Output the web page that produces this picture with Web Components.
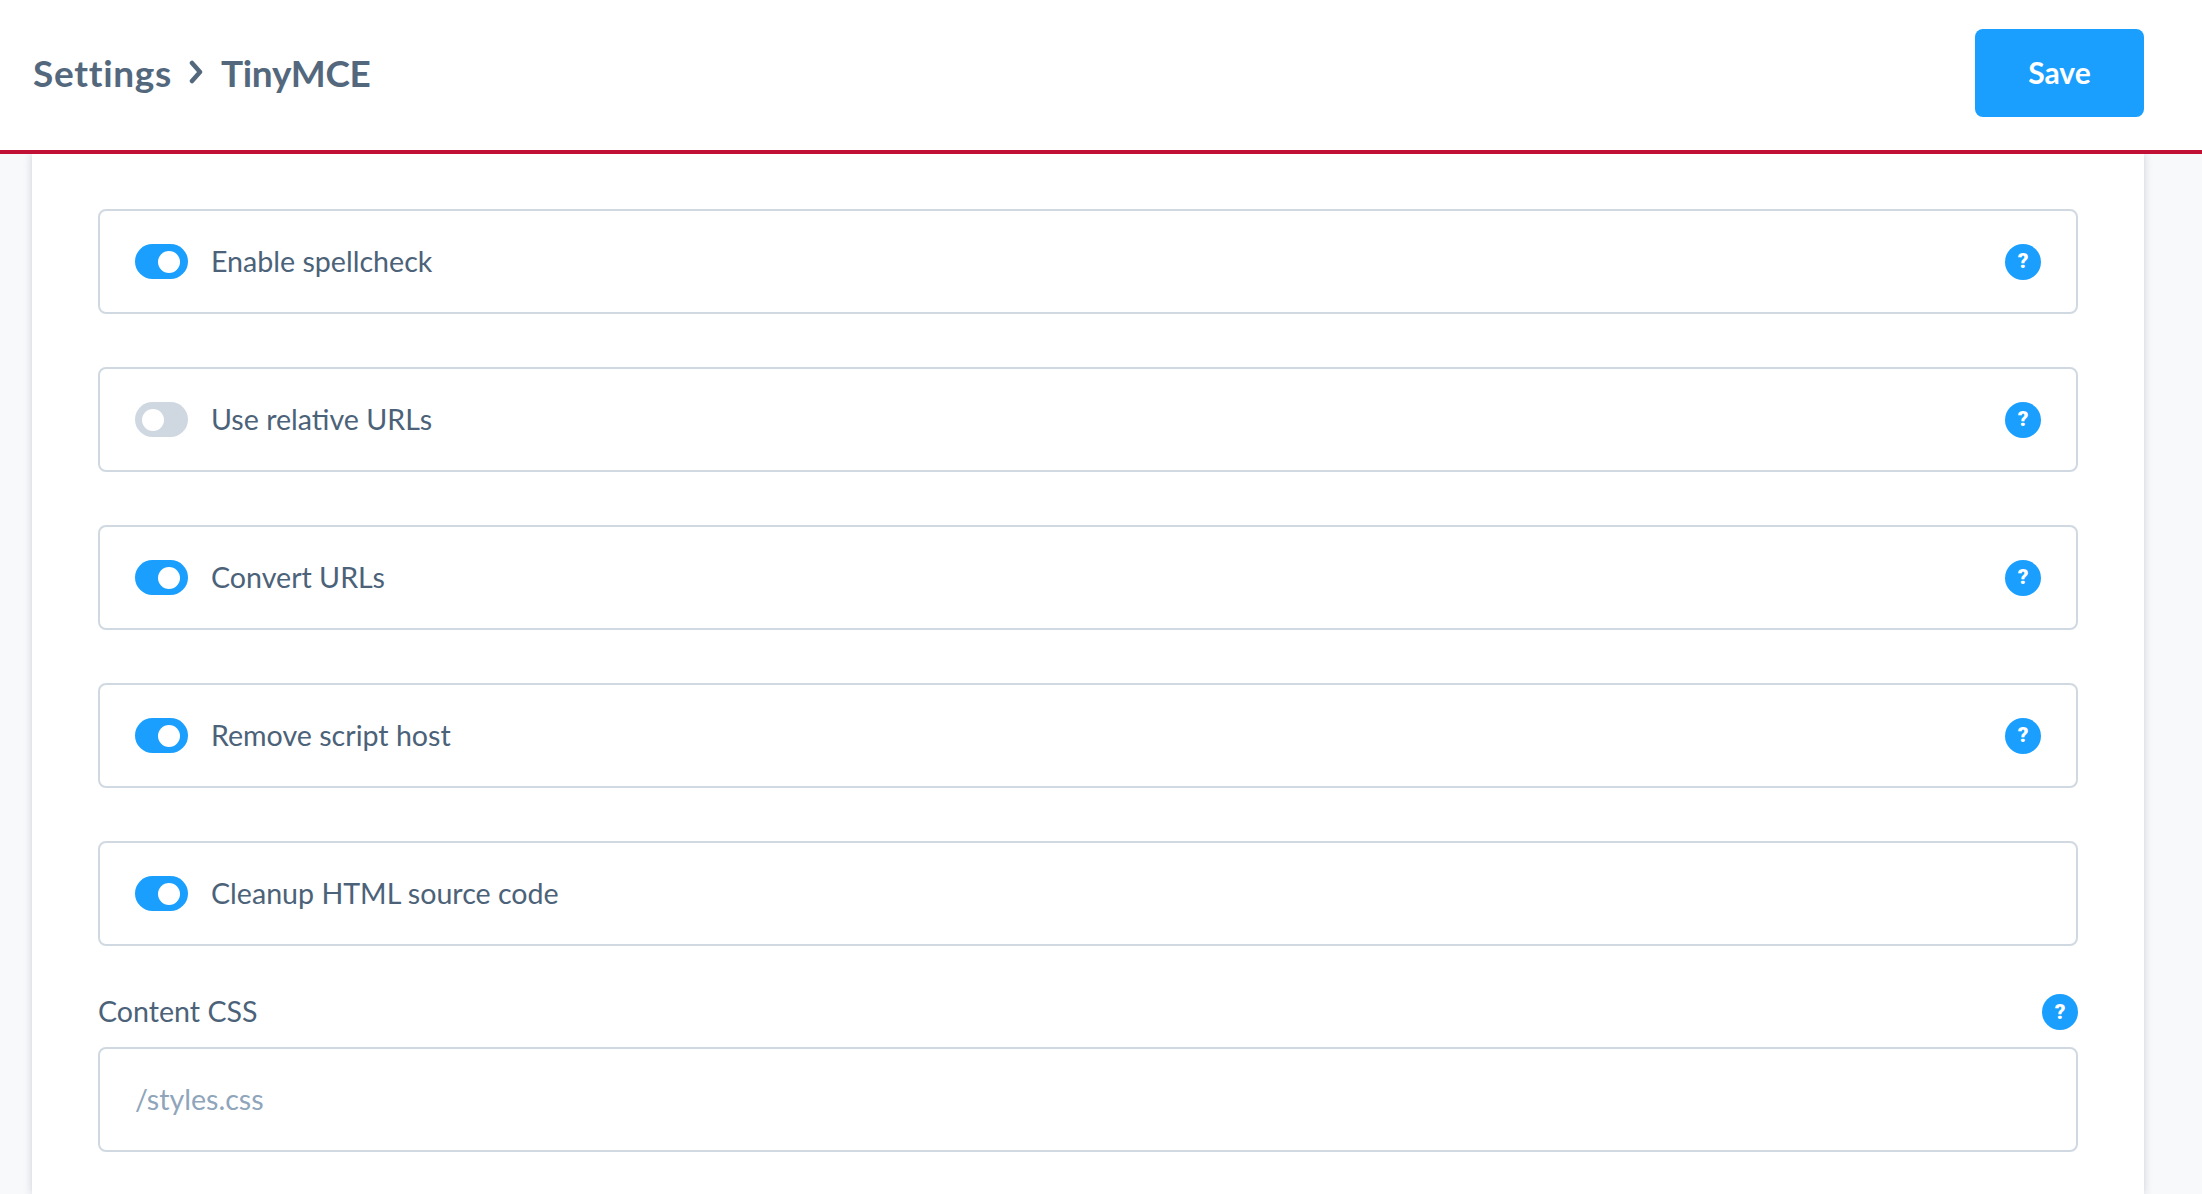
<!DOCTYPE html>
<html lang="en">
<head>
<meta charset="utf-8">
<title>Settings - TinyMCE</title>
<style>
  html, body { margin: 0; height: 100%; overflow: hidden; }
  body {
    background: #f8f9fb;
    color: #4b6279;
    font-family: "Lato", "Liberation Sans", sans-serif;
  }
</style>
</head>
<body>
<settings-page>
  <page-header slot="header" current="TinyMCE"></page-header>
  <toggle-row label="Enable spellcheck" checked help></toggle-row>
  <toggle-row label="Use relative URLs" help></toggle-row>
  <toggle-row label="Convert URLs" checked help></toggle-row>
  <toggle-row label="Remove script host" checked help></toggle-row>
  <toggle-row label="Cleanup HTML source code" checked></toggle-row>
  <text-field label="Content CSS" placeholder="/styles.css"></text-field>
</settings-page>

<script>
class SettingsPage extends HTMLElement {
  connectedCallback() {
    this.attachShadow({ mode: "open" });
    this.shadowRoot.innerHTML = `
      <style>
        :host { display: flex; flex-direction: column; height: 100vh; }
        .content {
          flex: 1;
          margin: 0 58px 0 32px;
          padding: 55px 66px 0;
          background: #fff;
          box-shadow: 0 0 8px rgba(40, 55, 75, 0.22);
          display: flex;
          flex-direction: column;
          gap: 53px;
        }
      </style>
      <slot name="header"></slot>
      <main class="content"><slot></slot></main>
    `;
  }
}

class PageHeader extends HTMLElement {
  connectedCallback() {
    this.attachShadow({ mode: "open" });
    this.shadowRoot.innerHTML = `
      <style>
        :host {
          display: flex;
          align-items: center;
          justify-content: space-between;
          box-sizing: border-box;
          height: 154px;
          padding: 0 58px 4px 33px;
          background: #fff;
          border-bottom: 4px solid #c01034;
          position: relative;
          z-index: 2;
        }
        .crumbs {
          display: flex;
          align-items: center;
          padding-bottom: 2px;
          font-size: 37px;
          font-weight: 700;
          color: #53687d;
        }
        .root { letter-spacing: 0.7px; }
        .current { letter-spacing: -0.3px; }
        svg { width: 18px; height: 24px; margin: 0 16px 0 15px; }
        button {
          width: 169px;
          height: 88px;
          padding: 0 0 2px;
          border: 0;
          border-radius: 8px;
          background: #1a9fff;
          color: #fff;
          font: 700 30px "Lato", "Liberation Sans", sans-serif;
        }
      </style>
      <div class="crumbs">
        <span class="root">Settings</span>
        <svg viewBox="0 0 18 24" fill="none" stroke="#53687d" stroke-width="4.5" stroke-linecap="round" stroke-linejoin="round"><path d="M5 3l8 9-8 9"/></svg>
        <span class="current">${this.getAttribute("current")}</span>
      </div>
      <button type="button">Save</button>
    `;
  }
}

class HelpIcon extends HTMLElement {
  connectedCallback() {
    this.attachShadow({ mode: "open" });
    this.shadowRoot.innerHTML = `
      <style>
        :host {
          display: flex;
          align-items: center;
          justify-content: center;
          flex: none;
          width: 36px;
          height: 36px;
          border-radius: 50%;
          background: #1a9fff;
          color: #fff;
          font: 900 21px/1 "Roboto", "Liberation Sans", sans-serif;
        }
      </style>
      <span>?</span>
    `;
  }
}

class ToggleSwitch extends HTMLElement {
  connectedCallback() {
    this.attachShadow({ mode: "open" });
    this.shadowRoot.innerHTML = `
      <style>
        :host {
          display: flex;
          align-items: center;
          justify-content: flex-start;
          flex: none;
          box-sizing: border-box;
          width: 53px;
          height: 35px;
          padding: 0 8px 0 7px;
          border-radius: 18px;
          background: #cfd8e1;
        }
        :host([checked]) { background: #1a9fff; justify-content: flex-end; }
        i { width: 22px; height: 22px; border-radius: 50%; background: #fff; }
      </style>
      <i></i>
    `;
  }
}

class ToggleRow extends HTMLElement {
  connectedCallback() {
    this.attachShadow({ mode: "open" });
    const on = this.hasAttribute("checked") ? "checked" : "";
    const help = this.hasAttribute("help") ? "<help-icon></help-icon>" : "";
    this.shadowRoot.innerHTML = `
      <style>
        :host {
          display: flex;
          align-items: center;
          box-sizing: border-box;
          height: 105px;
          padding: 0 35px;
          border: 2px solid #d0d9e2;
          border-radius: 8px;
          background: #fff;
          font-size: 28.6px;
        }
        span { flex: 1; margin-left: 23px; padding-bottom: 2px; }
      </style>
      <toggle-switch ${on}></toggle-switch>
      <span>${this.getAttribute("label")}</span>
      ${help}
    `;
  }
}

class TextField extends HTMLElement {
  connectedCallback() {
    this.attachShadow({ mode: "open" });
    this.shadowRoot.innerHTML = `
      <style>
        :host { display: block; margin-top: -5px; font-size: 28.6px; }
        .top {
          display: flex;
          align-items: center;
          justify-content: space-between;
          margin-bottom: 17px;
        }
        label { padding-bottom: 2px; }
        input {
          display: block;
          box-sizing: border-box;
          width: 100%;
          height: 105px;
          padding: 0 35px 2px;
          border: 2px solid #d0d9e2;
          border-radius: 8px;
          background: #fff;
          color: #4b6279;
          font: inherit;
          outline: 0;
        }
        input::placeholder { color: #8fa5bb; opacity: 1; }
      </style>
      <div class="top">
        <label for="f">${this.getAttribute("label")}</label>
        <help-icon></help-icon>
      </div>
      <input id="f" type="text" placeholder="${this.getAttribute("placeholder")}">
    `;
  }
}

customElements.define("help-icon", HelpIcon);
customElements.define("toggle-switch", ToggleSwitch);
customElements.define("toggle-row", ToggleRow);
customElements.define("text-field", TextField);
customElements.define("page-header", PageHeader);
customElements.define("settings-page", SettingsPage);
</script>
</body>
</html>
